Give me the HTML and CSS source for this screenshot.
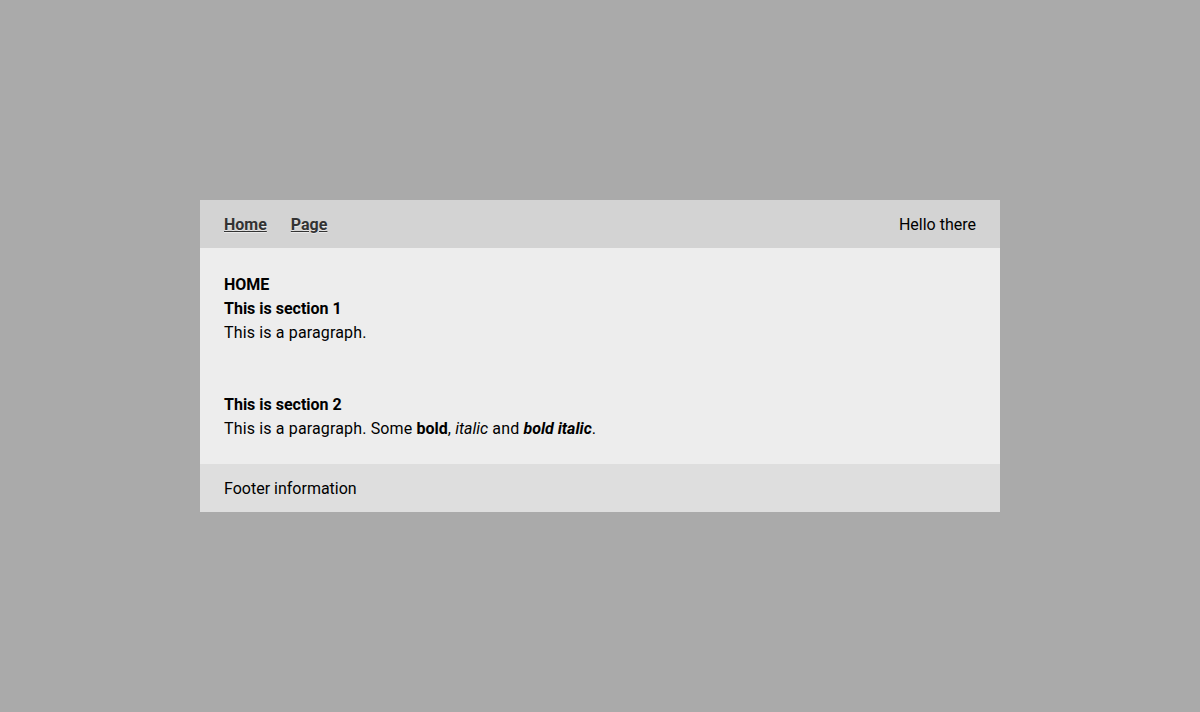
FILE: index.html
```html
<!DOCTYPE html>
<html lang="en">

<head>
    <meta charset="UTF-8">
    <meta name="viewport" content="width=device-width, initial-scale=1.0">
    <title>Home</title>
    <link rel="stylesheet" href="styles.css">
</head>

<body>
    <div class="page">
        <header class="site-header">
            <nav class="nav">
                <a href="#">Home</a>
                <a href="#">Page</a>
            </nav>
            <div class="greeting">Hello there</div>
        </header>

        <main class="content">
            <section class="section">
                <h1>HOME</h1>
                <h2>This is section 1</h2>
                <p>This is a paragraph.</p>
            </section>
            <section class="section">
                <h2>This is section 2</h2>
                <p>This is a paragraph. Some <b>bold</b>, <i>italic</i> and <b><i>bold italic</i></b>.</p>
            </section>
        </main>

        <footer class="site-footer">Footer information</footer>
    </div>
</body>

</html>
```

FILE: styles.css
```css
* {
    margin: 0;
    padding: 0;
    box-sizing: border-box;
}

html,
body {
    height: 100%;
}

body {
    font-family: Roboto, "Liberation Sans", Arial, sans-serif;
    font-size: 16px;
    line-height: 24px;
    color: #000;
    background-color: #aaa;
    display: flex;
    align-items: center;
    justify-content: center;
}

.page {
    width: 800px;
}

.site-header {
    display: flex;
    justify-content: space-between;
    align-items: center;
    padding: 13px 24px 11px;
    background-color: #d3d3d3;
}

.nav {
    display: flex;
    gap: 24px;
}

.nav a {
    color: #333;
    font-weight: 700;
    text-decoration: underline;
    text-shadow: 0 1px 0 rgba(255, 255, 255, 0.5);
}

.content {
    padding: 25px 24px 23px;
    background-color: #ededed;
}

.section + .section {
    margin-top: 48px;
}

h1,
h2 {
    font-size: 16px;
    font-weight: 700;
}

p {
    letter-spacing: 0.15px;
}

p b,
p i {
    letter-spacing: 0;
}

.site-footer {
    padding: 13px 24px 11px;
    background-color: #dedede;
}
```
